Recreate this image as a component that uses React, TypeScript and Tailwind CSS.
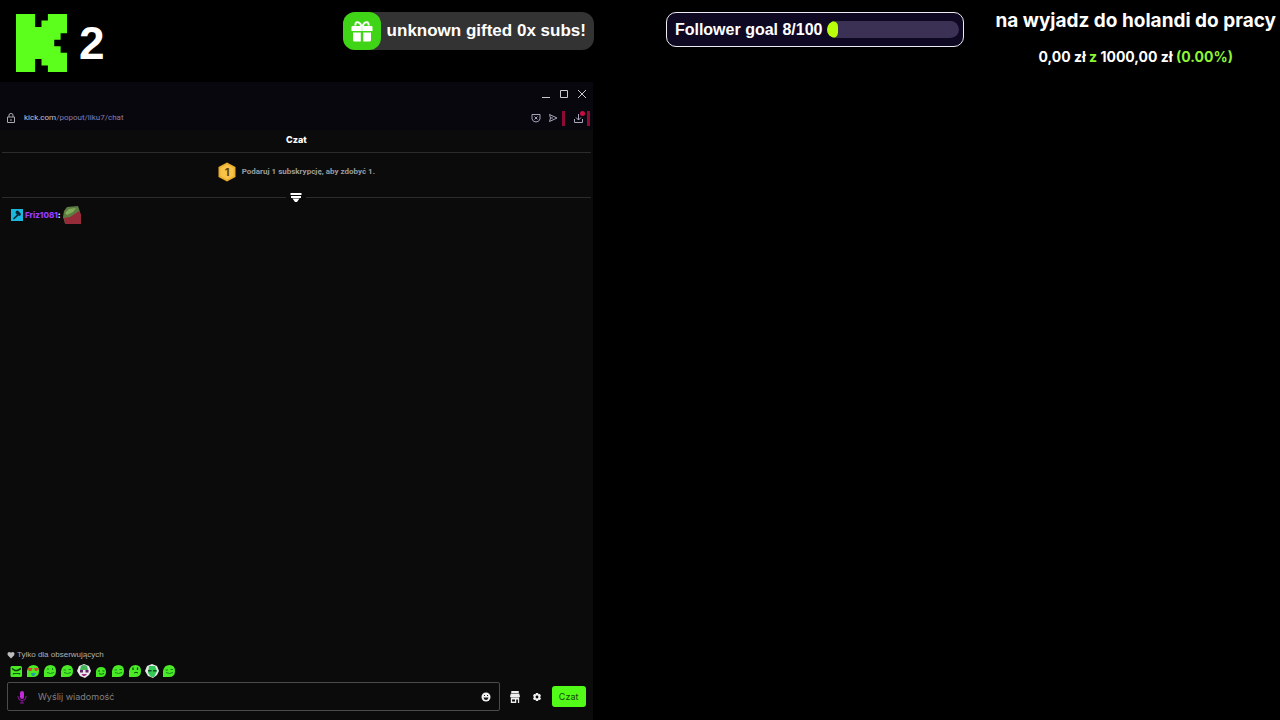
import React from "react";

type BlobFace = "angry" | "love" | "smile" | "wink" | "clown" | "small" | "calm" | "think" | "shades" | "wave";

const emotes: BlobFace[] = [
  "angry",
  "love",
  "smile",
  "wink",
  "clown",
  "small",
  "calm",
  "think",
  "shades",
  "wave",
];

const KickLogo: React.FC = () => (
  <svg viewBox="0 0 8 9" className="h-[58px] w-[51px] shrink-0" fill="#5cff1c" preserveAspectRatio="none">
    <path d="M0 0H3V2H4V1H5V0H8V3H7V4H6V5H7V6H8V9H5V8H4V7H3V9H0Z" />
  </svg>
);

const GiftIcon: React.FC = () => (
  <svg viewBox="0 0 22 22" className="size-[22px]" fill="#fff">
    <path
      d="M10.5 6.5C9 1 3.500 1 4.500 5.500M11.500 6.500C13 1 18.500 1 17.500 5.500"
      fill="none"
      stroke="#fff"
      strokeWidth="2"
    />
    <path d="M1.500 6H20.500Q21.500 6 21.500 7V11H.500V7Q.500 6 1.500 6Z" />
    <path d="M2 12.500H9.800V21.500H3.500Q2 21.500 2 20ZM12.200 12.500H20V20Q20 21.500 18.500 21.500H12.200Z" />
    <path d="M9.800 6.500H12.200V11H9.800Z" fill="#e4f8dd" />
  </svg>
);

const Emote: React.FC<{ face: BlobFace }> = ({ face }) => {
  const pale = face === "clown" || face === "shades";
  return (
    <svg viewBox="0 0 14 14" className="size-3.5">
      {pale && <path d="M7 0L12 2L14 7L12 11L8 14L3 12L0 7L2 2Z" fill="#e9e6e9" />}
      {face === "angry" && <rect x="1.500" y="2" width="11.500" height="11" rx="1.500" fill="#4bea27" />}
      {face === "small" && <path d="M2 13V7Q3 3 7 3Q12 3 12 8Q12 13 7 13Z" fill="#46e824" />}
      {face === "shades" && <path d="M4 2H10L12 7L9 13H6L3 9Z" fill="#32c957" />}
      {face === "clown" && <path d="M4 2Q7 0 10 2L11 6H3Z" fill="#43b55b" />}
      {!pale && face !== "angry" && face !== "small" && (
        <path d="M1 13V7Q2 1 7.500 1Q13 1 13 7Q13 13 7 13Z" fill="#4bea27" />
      )}
      {face === "angry" && (
        <>
          <path d="M3 4.500L6 6.500H8.500L12 4.500" stroke="#073d08" strokeWidth="1.500" fill="none" />
          <path d="M4.500 10.500V9.500H10.500V10.500" stroke="#0b5a10" strokeWidth="1.200" fill="none" />
        </>
      )}
      {face === "love" && (
        <>
          <path d="M1.500 4H6.500L5.500 7H3ZM8 4H13L11 7H9Z" fill="#d8452b" />
          <path d="M5 9H10L8 12H6Z" fill="#249da0" />
        </>
      )}
      {face === "clown" && (
        <>
          <path d="M3 6H6V8.500H3ZM8.500 6H11.500V8.500H8.500Z" fill="#5e2368" />
          <path d="M4.500 10H10L8 12H6Z" fill="#a02c89" />
        </>
      )}
      {face === "shades" && <path d="M3 6H6.500V7.500H3ZM8 6H11.500V7.500H8Z" fill="#134d24" />}
      {face === "small" && <path d="M4 7H6M8.500 7H10.500M5 9.500Q7 11 10 9.500" stroke="#09670d" fill="none" />}
      {face === "think" && (
        <>
          <path d="M5 3.500V6M9.500 3.500V6" stroke="#07490a" strokeWidth="1.300" />
          <path d="M6 9Q8 7.500 10 9" stroke="#07490a" fill="none" />
        </>
      )}
      {(face === "smile" || face === "wink" || face === "calm" || face === "wave") && (
        <g stroke="#14891a" fill="none">
          <path d={face === "smile" ? "M5 4V6M9.500 4V6" : "M3.500 6H6M8.500 5.500H11"} />
          <path d="M4 8.500Q7.500 10.500 11 8.500" />
        </g>
      )}
    </svg>
  );
};

const TopBar: React.FC = () => (
  <header className="flex h-[82px] items-start">
    <div className="flex w-[46.4%] items-start justify-between pl-4">
      <div className="flex items-center gap-3 pt-3.5">
        <KickLogo />
        <span className="text-[46px] leading-[58px] font-bold">2</span>
      </div>
      <div className="mt-3 flex h-[38px] items-center rounded-xl bg-[#333333] pr-2">
        <span className="flex h-full w-[38px] items-center justify-center rounded-xl bg-[#3fd416]">
          <GiftIcon />
        </span>
        <span className="pl-1.5 text-[17px] font-bold whitespace-nowrap">unknown gifted 0x subs!</span>
      </div>
    </div>
    <div className="flex flex-1 items-start justify-between pr-1 pl-[72px]">
      <div className="mt-3 flex h-[35px] w-[298px] items-center gap-1 rounded-[10px] border border-[#ececf2] bg-[#0e0823] pr-1 pl-2">
        <label htmlFor="goal" className="text-base font-bold whitespace-nowrap">
          Follower goal 8/100
        </label>
        <div
          id="goal"
          role="progressbar"
          aria-valuenow={8}
          aria-valuemax={100}
          className="h-[17px] flex-1 overflow-hidden rounded-full bg-[#3a3154]"
        >
          <div className="h-full rounded-full bg-[#baff0a]" style={{ width: "9%" }} />
        </div>
      </div>
      <div className="pt-[7px] text-center font-['Inter',sans-serif] font-bold whitespace-nowrap">
        <h1 className="text-[19px] leading-7">na wyjadz do holandi do pracy</h1>
        <p className="pt-3 text-sm leading-5">
          0,00 zł <span className="text-[#8df534]">z</span> 1000,00 zł{" "}
          <span className="text-[#8df534]">(0.00%)</span>
        </p>
      </div>
    </div>
  </header>
);

const BrowserBar: React.FC = () => (
  <div className="bg-[#08070d]">
    <div className="flex h-6 items-center justify-end gap-2 pr-1.5 text-[#c9c7d0]">
      <button aria-label="Minimize">
        <svg viewBox="0 0 10 10" className="size-2.5" stroke="currentColor">
          <path d="M1 8.500H9" />
        </svg>
      </button>
      <button aria-label="Maximize">
        <svg viewBox="0 0 10 10" className="size-2.5" fill="none" stroke="currentColor">
          <path d="M1.500 1.500H8.500V8.500H1.500Z" />
        </svg>
      </button>
      <button aria-label="Close">
        <svg viewBox="0 0 10 10" className="size-2.5" stroke="currentColor">
          <path d="M1 1L9 9M9 1L1 9" />
        </svg>
      </button>
    </div>
    <div className="flex h-6 items-center pr-[3px] pl-1.5">
      <svg viewBox="0 0 10 12" className="h-3 w-2.5" fill="none" stroke="#aaa8b1">
        <path d="M1.500 5H8.500V10.500H1.500ZM3 5V3Q3 1.500 5 1.500Q7 1.500 7 3V5M5 7V9" />
      </svg>
      <a href="#chat" className="pl-2 font-['Roboto',sans-serif] text-[8px] leading-3 text-[#8a7daa]">
        <span className="text-[#c6c2d2]">kick.com</span>/popout/liku7/chat
      </a>
      <div className="ml-auto flex items-center text-[#aaa5bb]">
        <button aria-label="Shield">
          <svg viewBox="0 0 10 10" className="size-2.5" fill="none" stroke="currentColor">
            <path d="M1 1.500H9V6Q8 9 5 9Q2 9 1 6ZM3.500 3.500L6.500 6.500M6.500 3.500L3.500 6.500" />
          </svg>
        </button>
        <button aria-label="Send" className="ml-[7px]">
          <svg viewBox="0 0 10 10" className="size-2.5" fill="none" stroke="currentColor">
            <path d="M1.500 1.500L9 5L1.500 8.500L2.500 5ZM2.500 5H5" />
          </svg>
        </button>
        <span className="ml-1 h-[15px] w-[3px] bg-[#8e0b36]" />
        <button aria-label="Downloads" className="ml-2">
          <svg viewBox="0 0 12 14" className="h-3.5 w-3" fill="none" stroke="currentColor">
            <path d="M1.500 8V11.500H9.500V8M5.500 3V9M3 6.500L5.500 9L8 6.500" />
            <circle cx="9.500" cy="2.500" r="2.500" fill="#c80d44" stroke="none" />
          </svg>
        </button>
        <span className="ml-0.5 h-[15px] w-[3px] bg-[#8e0b36]" />
      </div>
    </div>
  </div>
);

const ChatFooter: React.FC = () => (
  <footer className="pr-[7px] pb-[9px] pl-[7px]">
    <p className="flex items-center gap-0.5 font-['Liberation_Sans',sans-serif] text-[8px] leading-3 text-[#b0b0b0]">
      <svg viewBox="0 0 8 8" className="size-2" fill="#bdbdbd">
        <path d="M4 7.500L.800 4.300Q0 2.500 1 1.400Q2.500 .200 4 1.800Q5.500 .200 7 1.400Q8 2.500 7.200 4.300Z" />
      </svg>
      Tylko dla obserwujących
    </p>
    <div className="flex gap-[3px] pt-[3px] pb-1 pl-0.5">
      {emotes.map((face) => (
        <button key={face} aria-label={face}>
          <Emote face={face} />
        </button>
      ))}
    </div>
    <form className="flex items-center" onSubmit={(e) => e.preventDefault()}>
      <div className="flex h-[29px] flex-1 items-center rounded-xs border border-[#4b4b4b] pr-2 pl-[9px]">
        <svg viewBox="0 0 10 14" className="h-3.5 w-2.5" fill="none" stroke="#8d149e">
          <rect x="3" y="1" width="4" height="8" rx="2" fill="#c12bd5" stroke="none" />
          <path d="M1 6V7Q1 10.500 5 10.500Q9 10.500 9 7V6M5 10.500V13M3 13H7" />
        </svg>
        <input
          aria-label="Wyślij wiadomość"
          placeholder="Wyślij wiadomość"
          className="min-w-0 flex-1 bg-transparent pl-[11px] text-[9px] outline-none placeholder:text-[#808080]"
        />
        <button type="button" aria-label="Emoji">
          <svg viewBox="0 0 10 10" className="size-2.5">
            <circle cx="5" cy="5" r="4.500" fill="#f0f0f0" />
            <path d="M2.500 5.500H7.500Q7 8 5 8Q3 8 2.500 5.500ZM3 3H4V4H3ZM6 3H7V4H6Z" fill="#171717" />
          </svg>
        </button>
      </div>
      <button type="button" aria-label="Shop" className="ml-2.5">
        <svg viewBox="0 0 12 12" className="h-3 w-2.5" fill="#f0f0f0" preserveAspectRatio="none">
          <path d="M1.500 0H10.500V2H1.500ZM1 2.500H11L12 5.500Q11 7 9.500 6Q8 7 6 6Q4 7 2.500 6Q1 7 0 5.500Z" />
          <path d="M1 6.500H11V12H9.500V8.500H7.500V12H1ZM2.500 8.500V10.500H6V8.500Z" fillRule="evenodd" />
        </svg>
      </button>
      <button type="button" aria-label="Settings" className="ml-3">
        <svg viewBox="0 0 10 10" className="size-2.5">
          <path
            d="M4 1H6L6.500 2.300L8 2L9 4L8 5L9 6.500L8 8L6.500 7.700L6 9H4L3.500 7.700L2 8L1 6.500L2 5L1 4L2 2L3.500 2.300Z"
            fill="#f0f0f0"
          />
          <circle cx="5" cy="5" r="1.400" fill="#0b0b0b" />
        </svg>
      </button>
      <button
        type="submit"
        className="ml-2.5 h-[21px] w-[34px] rounded-[3px] bg-[#53fc18] text-[9px] text-[#12480c]"
      >
        Czat
      </button>
    </form>
  </footer>
);

const ChatWindow: React.FC = () => (
  <section
    id="chat"
    className="flex w-[46.3%] flex-1 flex-col bg-[#0b0b0c] font-['Inter',sans-serif]"
  >
    <BrowserBar />
    <div className="px-0.5">
      <h2 className="h-[23px] border-b border-[#2b2c2d] pt-1 text-center text-[9px] leading-3 font-extrabold">Czat</h2>
      <div className="relative flex h-[45px] items-center justify-center gap-1.5 border-b border-[#2b2c2d] pb-1.5">
        <svg viewBox="0 0 18 20" className="h-5 w-[18px]">
          <path d="M9 .500L17.500 5V15L9 19.500L.500 15V5Z" fill="#edae2d" />
          <path d="M9 2.500L15.500 6V14L9 17.500L2.500 14V6Z" fill="#f7c449" />
          <text x="9" y="14" textAnchor="middle" fontSize="11" fontWeight="700" fill="#66420b">
            1
          </text>
        </svg>
        <p className="font-['Roboto',sans-serif] text-[8px] leading-3 font-bold text-[#9a9d9f]">
          Podaruj 1 subskrypcję, aby zdobyć 1.
        </p>
        <button
          aria-label="Expand"
          className="absolute -bottom-1.5 left-1/2 flex w-5 -translate-x-1/2 justify-center bg-[#0b0b0c]"
        >
          <svg viewBox="0 0 12 10" className="h-2.5 w-3" fill="#fff">
            <path d="M.500 0H11.500V2H.500ZM1 3H11V5H1ZM2.500 5.500H9.500L7 9H5Z" />
          </svg>
        </button>
      </div>
    </div>
    <div className="flex flex-1 items-start px-[11px] pt-2">
      <div className="flex items-center text-[8px] leading-3 font-extrabold">
        <svg viewBox="0 0 12 12" className="size-3">
          <rect width="12" height="12" fill="#19b8dc" />
          <path d="M5 2L7 1.500L10 5L9 7L7.500 6.500L3 10.500L2 9.500L6 5.500L4.500 4Z" fill="#082631" />
        </svg>
        <span className="pl-0.5 text-[#9a3bff]">Friz1081</span>
        <span>:</span>
        <svg viewBox="0 0 18 18" className="ml-0.5 size-[18px]">
          <path d="M1 5L4 1L15 0L17 6V17H2L0 11Z" fill="#5e7c42" />
          <path d="M2 7L6 3L13 2L10 6L4 9Z" fill="#82ad58" />
          <path d="M1 12L7 11L16 5L18 8V18H2Z" fill="#962c3a" />
        </svg>
      </div>
    </div>
    <ChatFooter />
  </section>
);

const App: React.FC = () => {
  return (
    <main className="flex min-h-screen flex-col bg-black font-['Liberation_Sans',sans-serif] text-white">
      <TopBar />
      <ChatWindow />
    </main>
  );
};

export default App;
